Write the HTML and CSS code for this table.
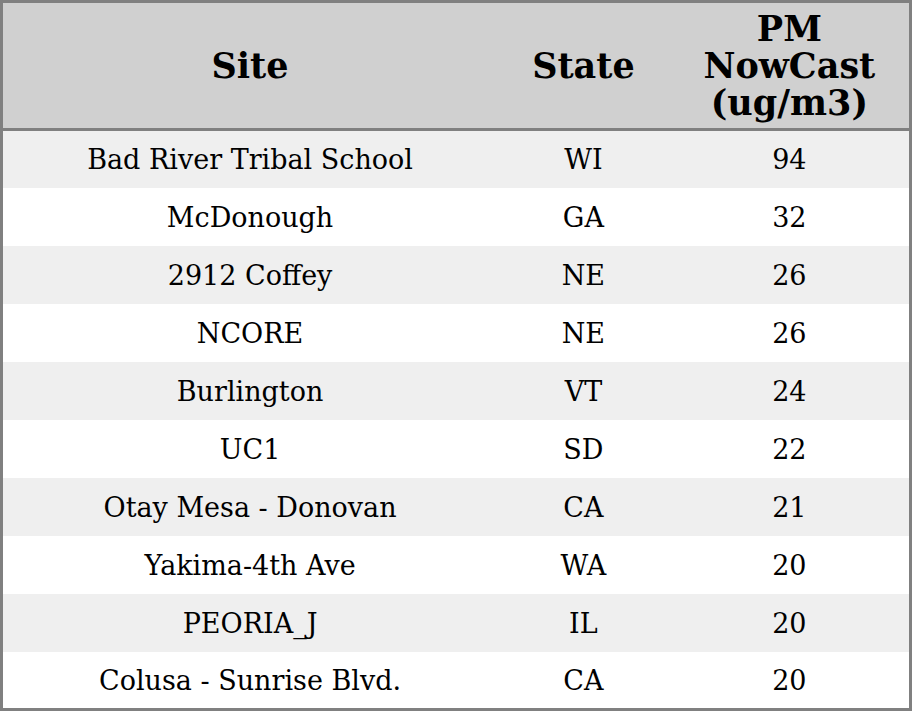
FILE: index.html
```html
<!DOCTYPE html>
<html>
<head>
<meta charset="utf-8">
<link rel="stylesheet" href="styles.css">
</head>
<body>
<table class="aq">
  <colgroup>
    <col class="c-site">
    <col class="c-state">
    <col class="c-pm">
  </colgroup>
  <thead>
    <tr class="head-row"><th>Site</th><th>State</th><th>PM<br>NowCast<br>(ug/m3)</th></tr>
  </thead>
  <tbody>
    <tr><td>Bad River Tribal School</td><td>WI</td><td>94</td></tr>
    <tr><td>McDonough</td><td>GA</td><td>32</td></tr>
    <tr><td>2912 Coffey</td><td>NE</td><td>26</td></tr>
    <tr><td>NCORE</td><td>NE</td><td>26</td></tr>
    <tr><td>Burlington</td><td>VT</td><td>24</td></tr>
    <tr><td>UC1</td><td>SD</td><td>22</td></tr>
    <tr><td>Otay Mesa - Donovan</td><td>CA</td><td>21</td></tr>
    <tr><td>Yakima-4th Ave</td><td>WA</td><td>20</td></tr>
    <tr><td>PEORIA_J</td><td>IL</td><td>20</td></tr>
    <tr><td>Colusa - Sunrise Blvd.</td><td>CA</td><td>20</td></tr>
  </tbody>
</table>
</body>
</html>
```
FILE: styles.css
```css
html, body {
  margin: 0;
  padding: 0;
  background: #ffffff;
}
.aq {
  width: 912px;
  height: 711px;
  border-collapse: collapse;
  border: 3px solid #808080;
  font-family: "DejaVu Serif", serif;
  color: #000;
  table-layout: fixed;
}
.c-site { width: 494px; }
.c-state { width: 172px; }
.c-pm { width: 240px; }
.head-row { height: 128px; }
.aq th {
  background: #d0d0d0;
  font-size: 35px;
  font-weight: bold;
  line-height: 37px;
  padding: 0;
  text-align: center;
  vertical-align: middle;
  border-bottom: 3px solid #808080;
}
.aq tbody tr { height: 57.7px; }
.aq td {
  font-size: 27px;
  line-height: 32px;
  padding: 2px 0 0;
  text-align: center;
  vertical-align: middle;
}
.aq tbody tr:nth-child(odd) td {
  background: #efefef;
}
```
